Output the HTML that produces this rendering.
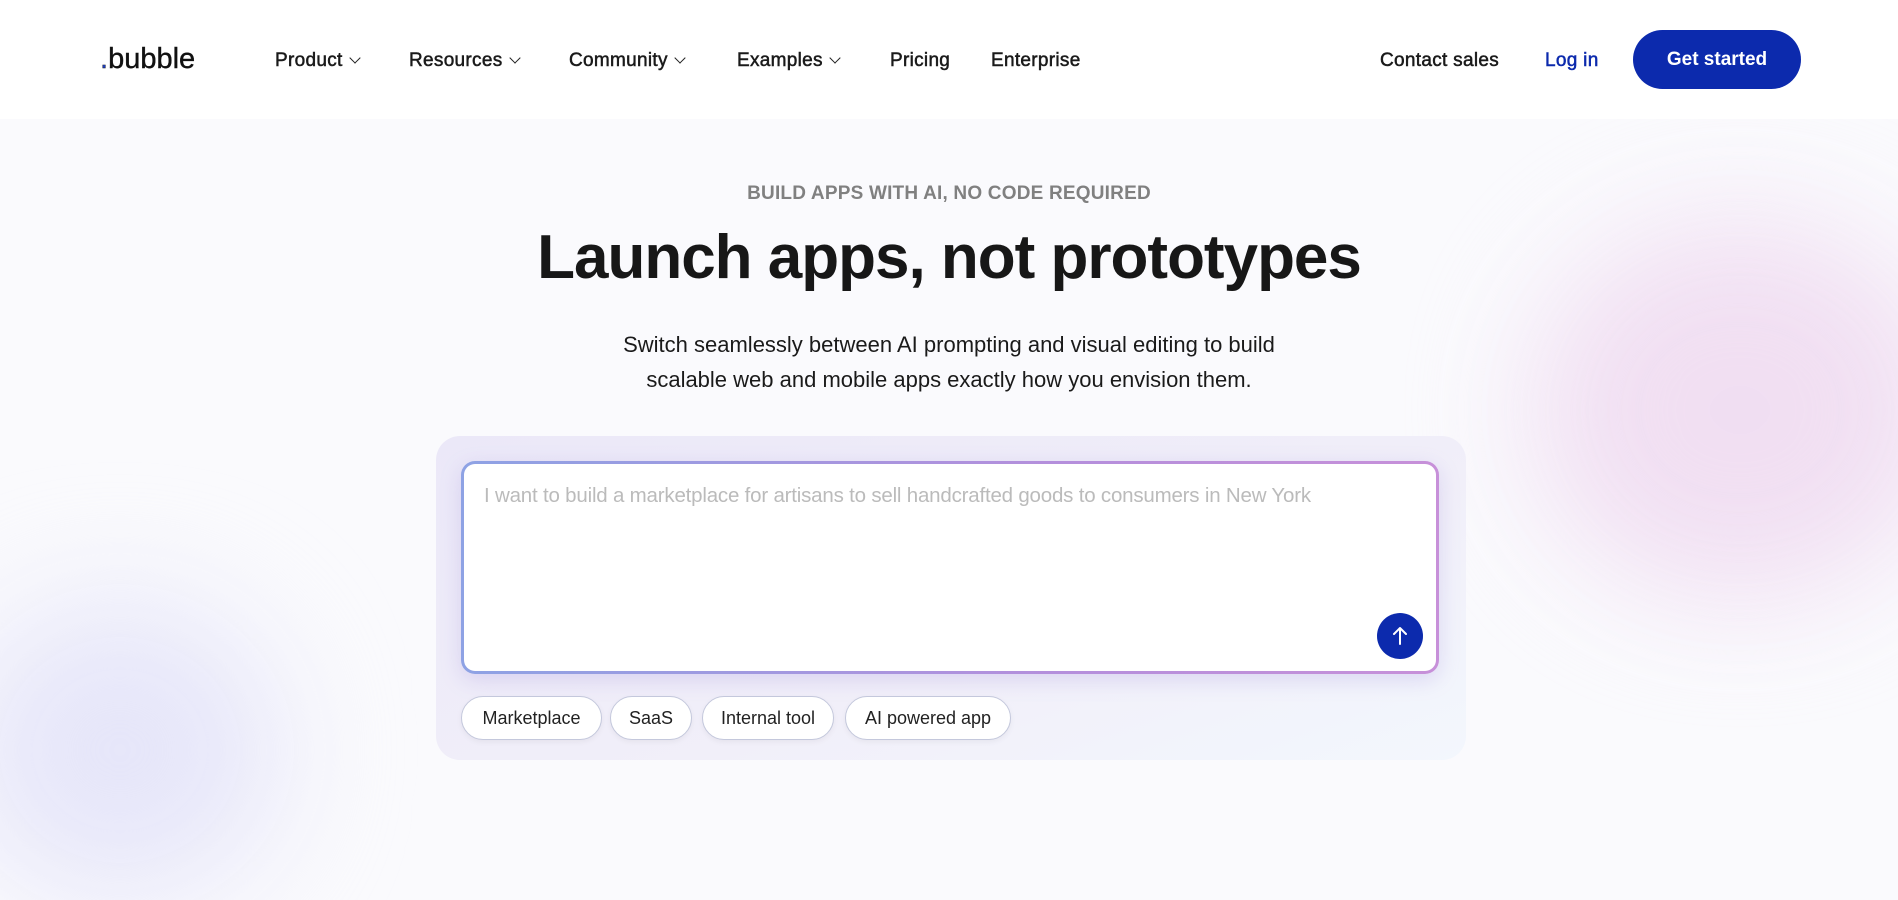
<!DOCTYPE html>
<html><head><meta charset="utf-8"><style>
*{margin:0;padding:0;box-sizing:border-box}
body{width:1898px;height:826px;overflow:hidden;background:#fafafd;font-family:"Liberation Sans",sans-serif;color:#111;position:relative}
.blob{position:absolute;border-radius:50%;filter:blur(60px)}
nav{position:absolute;top:0;left:0;width:1898px;height:119px;background:#fff}
.t{position:absolute;white-space:nowrap}
.nav{font-size:19px;top:50px;color:#1a1a1a;letter-spacing:0.3px;-webkit-text-stroke:0.5px #1a1a1a}
.chev{display:inline-block;width:8px;height:8px;border-right:1.5px solid #222;border-bottom:1.5px solid #222;transform:rotate(45deg);margin-left:8px;position:relative;top:-4px;-webkit-text-stroke:0}
.btn{position:absolute;left:1633px;top:30px;width:168px;height:59px;border-radius:30px;background:#0c2aad;color:#fff;font-size:19px;font-weight:bold;text-align:center;line-height:59px}
.card{position:absolute;left:436px;top:436px;width:1030px;height:324px;border-radius:24px;background:linear-gradient(160deg,#ebe8f8,#f1eff9 60%,#f3f7fd)}
.ta{position:absolute;left:461px;top:461px;width:978px;height:213px;border-radius:14px;padding:3px;background:linear-gradient(90deg,#8ea2e4,#b48fdc 60%,#c790d9);box-shadow:0 6px 20px rgba(150,130,220,.25)}
.ta div{width:100%;height:100%;background:#fff;border-radius:11px}
.send{position:absolute;left:1377px;top:613px;width:46px;height:46px;border-radius:50%;background:#0c2aad}
.chip{position:absolute;top:696px;height:44px;border-radius:22px;border:1px solid #c4c8dc;background:#fff;font-size:18px;line-height:42px;text-align:center;color:#222;box-shadow:0 2px 6px rgba(0,0,0,.05)}
</style></head><body>
<div class="blob" style="left:1530px;top:220px;width:420px;height:380px;background:#f0dcf1;opacity:.9"></div>
<div class="blob" style="left:-40px;top:600px;width:320px;height:300px;background:#e6e6f9"></div>
<nav></nav>
<div class="t" style="left:100px;top:43px;font-size:29px;letter-spacing:0px;color:#111;-webkit-text-stroke:0.4px #111"><span style="color:#1f3fc0">.</span>bubble</div>
<div class="t nav" style="left:275px">Product<span class="chev"></span></div>
<div class="t nav" style="left:409px">Resources<span class="chev"></span></div>
<div class="t nav" style="left:569px">Community<span class="chev"></span></div>
<div class="t nav" style="left:737px">Examples<span class="chev"></span></div>
<div class="t nav" style="left:890px">Pricing</div>
<div class="t nav" style="left:991px">Enterprise</div>
<div class="t nav" style="left:1380px">Contact sales</div>
<div class="t nav" style="left:1545px;color:#0c2aad;-webkit-text-stroke:0.5px #0c2aad">Log in</div>
<div class="btn">Get started</div>
<div class="t" style="left:0;width:1898px;text-align:center;top:183px;font-size:19px;font-weight:bold;color:#808080;letter-spacing:0.2px">BUILD APPS WITH AI, NO CODE REQUIRED</div>
<div class="t" style="left:0;width:1898px;text-align:center;top:222px;font-size:62px;font-weight:bold;letter-spacing:-1px;color:#171717">Launch apps, not prototypes</div>
<div class="t" style="left:0;width:1898px;text-align:center;top:327px;font-size:22px;line-height:35px;color:#1a1a1a">Switch seamlessly between AI prompting and visual editing to build<br>scalable web and mobile apps exactly how you envision them.</div>
<div class="card"></div>
<div class="ta"><div></div></div>
<div class="t" style="left:484px;top:484px;font-size:20.5px;color:#bbb;letter-spacing:-0.2px">I want to build a marketplace for artisans to sell handcrafted goods to consumers in New York</div>
<div class="send"><svg width="46" height="46" viewBox="0 0 46 46"><path d="M23 31V15M17 21l6-6 6 6" stroke="#fff" stroke-width="2" fill="none" stroke-linecap="round" stroke-linejoin="round"/></svg></div>
<div class="chip" style="left:461px;width:141px">Marketplace</div>
<div class="chip" style="left:610px;width:82px">SaaS</div>
<div class="chip" style="left:702px;width:132px">Internal tool</div>
<div class="chip" style="left:845px;width:166px">AI powered app</div>
</body></html>
